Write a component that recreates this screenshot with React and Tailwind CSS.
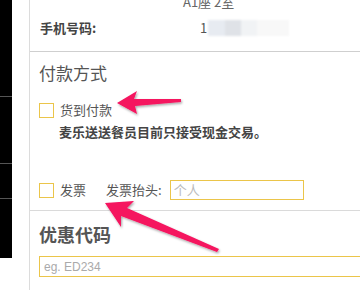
import React from 'react'

const cjk = { fontFamily: '"Noto Sans CJK SC", "Liberation Sans", sans-serif' }

function Checkbox() {
  return <span className="block h-[15px] w-[15px] shrink-0 border border-[#ebc54a] bg-white" />
}

function Arrows() {
  return (
    <svg className="pointer-events-none absolute left-0 top-0" width="360" height="290" viewBox="0 0 360 290">
      <defs>
        <filter id="sh" x="-20%" y="-20%" width="140%" height="140%">
          <feDropShadow dx="1" dy="1.5" stdDeviation="1" floodColor="#000" floodOpacity="0.35" />
        </filter>
      </defs>
      <g fill="#f5135f" filter="url(#sh)">
        {/* upper arrow, pointing left */}
        <path d="M117 103 L137 91 L134 99 L181 99 L181 102 L135 106 L137 114 Z" />
        {/* lower arrow, pointing up-left */}
        <path d="M105 203 L134 201 L127 208 L219 249 L217 252 L121 216 L121 227 Z" />
      </g>
    </svg>
  )
}

export default function App() {
  return (
    <div className="relative flex h-[290px] w-[360px] overflow-hidden bg-white text-[#555]" style={cjk}>
      <div className="flex w-[12px] shrink-0 flex-col">
        <div className="h-[97px] border-b border-[#555] bg-black" />
        <div className="h-[67px] border-b border-[#555] bg-black" />
        <div className="h-[35px] border-b border-[#555] bg-black" />
        <div className="h-[59px] bg-black" />
      </div>
      <div className="ml-[17px] flex min-w-0 flex-1 flex-col border-l border-[#dcdcdc]">
        <div className="relative h-[52px] border-b border-[#cfcfcf]">
          <span className="absolute left-[153px] top-[-6px] text-[13px] leading-[16px] text-[#666]">A1座 2室</span>
          <div className="flex items-center pt-[18px]">
            <span className="ml-[10px] w-[160px] text-[13px] font-bold text-[#444]">手机号码:</span>
            <span className="text-[13px] text-[#555]">1</span>
            <div className="ml-[1px] flex h-[16px] blur-[1px]">
              <span className="w-[17px] bg-[#e7ebf1]" />
              <span className="w-[16px] bg-[#dfe2e7]" />
              <span className="w-[16px] bg-[#f1f3f5]" />
              <span className="w-[32px] bg-[#f8f8f8]" />
            </div>
          </div>
        </div>

        <div className="flex h-[159px] flex-col border-b border-[#dadada] pl-[9px]">
          <div className="mt-[9px] text-[17px] leading-[24px] text-[#555]">付款方式</div>
          <div className="mt-[17px] flex items-center gap-[6px]">
            <Checkbox />
            <span className="text-[13px] leading-[16px] text-[#555]">货到付款</span>
          </div>
          <div className="ml-[20px] mt-[5px] text-[13px] font-bold leading-[17px] text-[#444]">
            麦乐送送餐员目前只接受现金交易。
          </div>
          <div className="mt-[40px] flex items-center">
            <Checkbox />
            <span className="ml-[6px] text-[13px] text-[#555]">发票</span>
            <span className="ml-[20px] text-[13px] text-[#555]">发票抬头:</span>
            <div className="ml-[8px] flex h-[20px] w-[134px] items-center border border-[#ebc54a] px-[3px] text-[13px] text-[#bbb]">
              个人
            </div>
          </div>
        </div>

        <div className="flex flex-col pl-[9px]">
          <div className="mt-[11px] text-[18px] font-bold leading-[24px] text-[#555]">优惠代码</div>
          <div
            className="mt-[10px] flex h-[21px] w-[340px] items-center border border-[#ebc54a] px-[4px] text-[12px] text-[#aaa]"
            style={{ fontFamily: '"Liberation Sans", sans-serif' }}
          >
            eg. ED234
          </div>
        </div>
      </div>
      <Arrows />
    </div>
  )
}
